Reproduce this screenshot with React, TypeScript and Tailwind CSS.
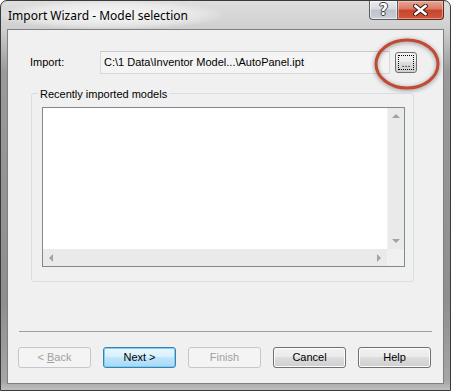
const font = { fontFamily: '"Liberation Sans", Arial, sans-serif' };

function ScrollArrow({ dir }: { dir: "up" | "down" | "left" | "right" }) {
  const pts = {
    up: "0,4 4,0 8,4",
    down: "0,0 8,0 4,4",
    left: "4,0 4,8 0,4",
    right: "0,0 0,8 4,4",
  }[dir];
  const vertical = dir === "up" || dir === "down";
  return (
    <svg width={vertical ? 8 : 4} height={vertical ? 4 : 8} viewBox={vertical ? "0 0 8 4" : "0 0 4 8"}>
      <polygon points={pts} fill="#a3a3a3" />
    </svg>
  );
}

function Button({ label, kind }: { label: React.ReactNode; kind: "normal" | "default" | "disabled" }) {
  const cls =
    kind === "disabled"
      ? "border-[#c4c8cc] bg-[#f4f4f4] text-[#a0a0a0]"
      : kind === "default"
      ? "border-[#3c7fb1] bg-[linear-gradient(#eaf6fd_0%,#d9f0fc_45%,#bee6fd_50%,#a7d9f5_100%)] text-black shadow-[inset_0_0_0_1px_#7ecef4]"
      : "border-[#707070] bg-[linear-gradient(#f2f2f2_0%,#ebebeb_45%,#dddddd_50%,#cfcfcf_100%)] text-black shadow-[inset_0_0_0_1px_#fcfcfc]";
  return (
    <div
      className={`w-[73px] h-[21px] rounded-[3px] border flex items-center justify-center text-[11px] ${cls}`}
    >
      {label}
    </div>
  );
}

export default function App() {
  return (
    <div className="w-[451px] h-[391px] bg-white" style={font}>
      <div className="relative w-full h-full flex flex-col rounded-t-[7px] border border-[#3a3a3a] bg-[linear-gradient(180deg,#dedede_0px,#cfcfcf_28px,#9a9a9a_70px,#8e8e8e_300px,#a6a6a6_380px,#c4c4c4_391px)]">
        {/* title bar */}
        <div className="h-[28px] flex items-start relative">
          <div className="absolute left-0 top-0 w-[220px] h-[28px] bg-[radial-gradient(ellipse_at_center,rgba(255,255,255,0.85)_0%,rgba(255,255,255,0.4)_55%,rgba(255,255,255,0)_75%)]" />
          <span
            className="relative ml-[7px] mt-[6px] text-[12px] text-black"
            style={{ fontFamily: '"Noto Sans", "Open Sans", sans-serif' }}
          >
            Import Wizard - Model selection
          </span>
          <div className="ml-auto mr-[6px] flex relative">
            <div className="w-[29px] h-[19px] rounded-bl-[4px] border border-t-0 border-[#5c5c5c] bg-[linear-gradient(#e9ecf0_0%,#d6dbe2_45%,#bcc3cc_50%,#c9cfd6_100%)] flex items-center justify-center shadow-[inset_0_0_0_1px_rgba(255,255,255,0.6)]">
              <span
                className="text-white font-bold text-[15px] leading-none"
                style={{
                  fontFamily: '"DejaVu Sans", sans-serif',
                  textShadow:
                    "1px 0 0 #3a3a3a, -1px 0 0 #3a3a3a, 0 1px 0 #3a3a3a, 0 -1px 0 #3a3a3a",
                }}
              >
                ?
              </span>
            </div>
            <div className="w-[46px] h-[19px] rounded-br-[4px] border border-l-0 border-t-0 border-[#5c2a22] bg-[linear-gradient(#e8a493_0%,#d97a64_45%,#c8442c_50%,#d0583c_100%)] flex items-center justify-center shadow-[inset_0_0_0_1px_rgba(255,220,210,0.5)]">
              <svg width="15" height="12" viewBox="0 0 15 12">
                <path d="M2.5 2 L12.5 10 M12.5 2 L2.5 10" stroke="#3a1a14" strokeWidth="4.5" strokeLinecap="square" />
                <path d="M2.5 2 L12.5 10 M12.5 2 L2.5 10" stroke="#ffffff" strokeWidth="2.6" strokeLinecap="square" />
              </svg>
            </div>
          </div>
        </div>

        {/* client area */}
        <div className="mx-[6px] h-[355px] border border-[#7f7f7f] bg-[#f0f0f0] flex flex-col text-[11px] text-black">
          {/* import row */}
          <div className="mt-[21px] flex items-center h-[23px]">
            <span className="ml-[22px] w-[70px]">Import:</span>
            <div className="w-[290px] h-[23px] border border-[#d8d8d8] border-t-[#c8c8c8] bg-[#f4f4f4] flex items-center pl-[3px]">
              C:\1 Data\Inventor Model...\AutoPanel.ipt
            </div>
            <div className="ml-[5px] w-[22px] h-[21px] rounded-[3px] border border-[#707070] bg-[linear-gradient(#f2f2f2_0%,#ebebeb_45%,#dddddd_50%,#cfcfcf_100%)] p-[2px]">
              <div className="w-full h-full border border-dotted border-black flex items-end justify-center leading-[12px]">
                ...
              </div>
            </div>
          </div>

          {/* group box */}
          <div className="relative mt-[19px] ml-[23px] w-[383px] h-[189px] rounded-[3px] border border-[#d5dfe5] pt-[13px] pl-[10px]">
            <span className="absolute left-[6px] top-[-8px] bg-[#f0f0f0] px-[2px]">Recently imported models</span>
            <div className="w-[363px] h-[160px] border border-[#828790] bg-white flex flex-col">
              <div className="flex-1 flex">
                <div className="flex-1" />
                <div className="w-[17px] bg-[#eaeaea] border-l border-[#f2f2f2] flex flex-col items-center justify-between py-[6px]">
                  <ScrollArrow dir="up" />
                  <ScrollArrow dir="down" />
                </div>
              </div>
              <div className="h-[17px] flex">
                <div className="flex-1 bg-[#eaeaea] flex items-center justify-between px-[6px]">
                  <ScrollArrow dir="left" />
                  <ScrollArrow dir="right" />
                </div>
                <div className="w-[17px] bg-[#f0f0f0]" />
              </div>
            </div>
          </div>

          {/* separator */}
          <div className="mt-[49px] mx-[11px] h-px bg-[#a0a0a0]" />

          {/* buttons */}
          <div className="mt-[15px] ml-[10px] flex gap-[12px]">
            <Button
              kind="disabled"
              label={
                <span>
                  &lt; <u>B</u>ack
                </span>
              }
            />
            <Button kind="default" label="Next >" />
            <Button kind="disabled" label="Finish" />
            <Button kind="normal" label="Cancel" />
            <Button kind="normal" label="Help" />
          </div>
        </div>

        {/* red highlight ellipse */}
        <svg className="absolute left-[370px] top-[34px]" width="72" height="58" viewBox="0 0 72 58">
          <defs>
            <filter id="glow" x="-20%" y="-20%" width="140%" height="140%">
              <feGaussianBlur stdDeviation="2" />
            </filter>
          </defs>
          <ellipse cx="36" cy="30" rx="31" ry="24" fill="none" stroke="#6a6a6a" strokeWidth="4" filter="url(#glow)" opacity="0.6" />
          <ellipse cx="36" cy="29" rx="31" ry="24" fill="none" stroke="#c24a33" strokeWidth="3" />
        </svg>
      </div>
    </div>
  );
}
